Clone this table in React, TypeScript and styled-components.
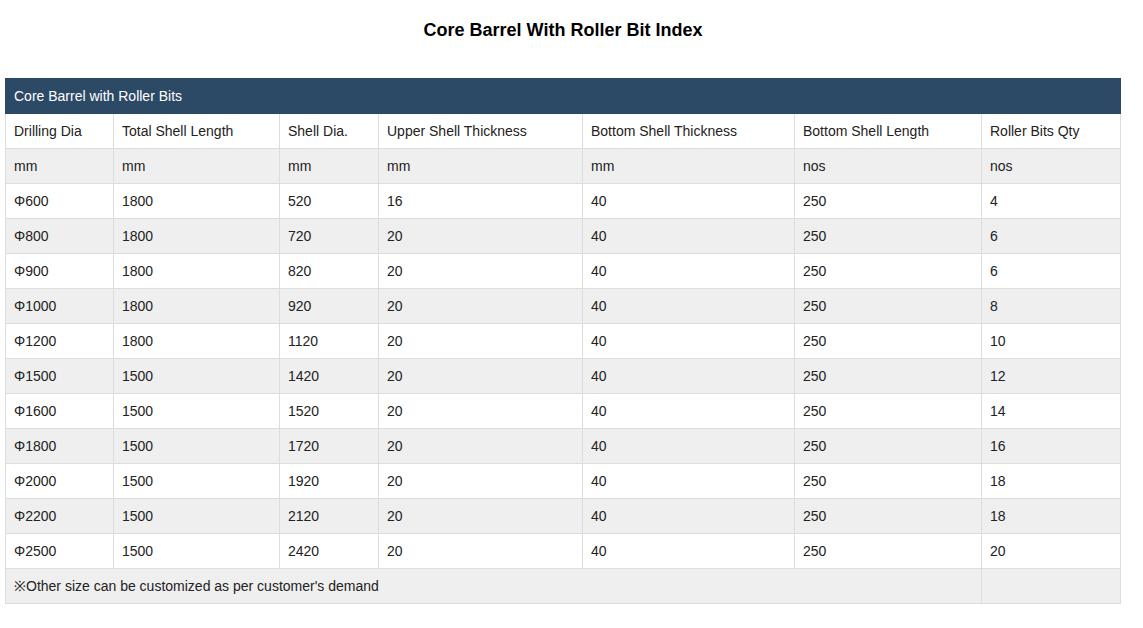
import styled, { createGlobalStyle } from 'styled-components'

const GlobalStyle = createGlobalStyle`
  html, body {
    margin: 0;
    padding: 0;
    background: #fff;
    font-family: Arial, "Liberation Sans", sans-serif;
  }
`

const Page = styled.div`
  width: 1116px;
  padding: 0 5px;
`

const Title = styled.h1`
  margin: 0;
  padding-top: 20px;
  height: 21px;
  margin-bottom: 37px;
  font-size: 18px;
  line-height: 21px;
  font-weight: bold;
  text-align: center;
  color: #000;
`

const Table = styled.table`
  width: 1115px;
  border-collapse: collapse;
  table-layout: fixed;
  font-size: 14px;
  color: #222;
`

const Col = styled.col<{ $w: number }>`
  width: ${(p) => p.$w}px;
`

const Row = styled.tr<{ $stripe?: boolean }>`
  background: ${(p) => (p.$stripe ? '#efefef' : '#fff')};
`

const Caption = styled.th`
  height: 34px;
  padding: 0 8px;
  background: #2c4a66;
  border: 1px solid #2c4a66;
  color: #fff;
  font-weight: normal;
  text-align: left;
`

const Cell = styled.td`
  height: 34px;
  padding: 0 8px;
  border: 1px solid #ddd;
  line-height: 16px;
  white-space: nowrap;
`

const widths = [108, 166, 99, 204, 212, 187, 139]

const head = [
  'Drilling Dia',
  'Total Shell Length',
  'Shell Dia.',
  'Upper Shell Thickness',
  'Bottom Shell Thickness',
  'Bottom Shell Length',
  'Roller Bits Qty',
]

const units = ['mm', 'mm', 'mm', 'mm', 'mm', 'nos', 'nos']

const data = [
  ['Φ600', '1800', '520', '16', '40', '250', '4'],
  ['Φ800', '1800', '720', '20', '40', '250', '6'],
  ['Φ900', '1800', '820', '20', '40', '250', '6'],
  ['Φ1000', '1800', '920', '20', '40', '250', '8'],
  ['Φ1200', '1800', '1120', '20', '40', '250', '10'],
  ['Φ1500', '1500', '1420', '20', '40', '250', '12'],
  ['Φ1600', '1500', '1520', '20', '40', '250', '14'],
  ['Φ1800', '1500', '1720', '20', '40', '250', '16'],
  ['Φ2000', '1500', '1920', '20', '40', '250', '18'],
  ['Φ2200', '1500', '2120', '20', '40', '250', '18'],
  ['Φ2500', '1500', '2420', '20', '40', '250', '20'],
]

const App = () => {
  return (
    <Page>
      <GlobalStyle />
      <Title>Core Barrel With Roller Bit Index</Title>
      <Table>
        <colgroup>
          {widths.map((w, i) => (
            <Col key={i} $w={w} />
          ))}
        </colgroup>
        <tbody>
          <tr>
            <Caption colSpan={7}>Core Barrel with Roller Bits</Caption>
          </tr>
          <Row>
            {head.map((h) => (
              <Cell key={h}>{h}</Cell>
            ))}
          </Row>
          <Row $stripe>
            {units.map((u, i) => (
              <Cell key={i}>{u}</Cell>
            ))}
          </Row>
          {data.map((r, ri) => (
            <Row key={r[0]} $stripe={ri % 2 === 1}>
              {r.map((v, i) => (
                <Cell key={i}>{v}</Cell>
              ))}
            </Row>
          ))}
          <Row $stripe>
            <Cell colSpan={6}>※Other size can be customized as per customer's demand</Cell>
            <Cell />
          </Row>
        </tbody>
      </Table>
    </Page>
  )
}

export default App
